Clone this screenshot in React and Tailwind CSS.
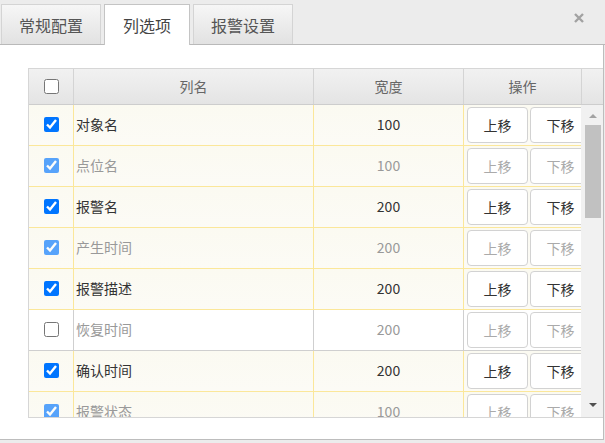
import React from "react";

const rows = [
  { name: "对象名", width: 100, on: true, enabled: true },
  { name: "点位名", width: 100, on: true, enabled: false },
  { name: "报警名", width: 200, on: true, enabled: true },
  { name: "产生时间", width: 200, on: true, enabled: false },
  { name: "报警描述", width: 200, on: true, enabled: true },
  { name: "恢复时间", width: 200, on: false, enabled: false },
  { name: "确认时间", width: 200, on: true, enabled: true },
  { name: "报警状态", width: 100, on: true, enabled: false },
];

const font = { fontFamily: '"Noto Sans CJK SC", "Liberation Sans", sans-serif' };

function Tab({ label, active }) {
  return (
    <div
      className={
        active
          ? "h-[41px] px-[18px] flex items-center border border-b-0 border-[#c4c4c4] bg-white text-[16px] text-[#444] relative top-[1px]"
          : "h-[40px] px-[17px] flex items-center border border-b-0 border-[#d4d4d4] bg-gradient-to-b from-[#f6f6f6] via-[#ececec] to-[#e2e2e2] text-[16px] text-[#555]"
      }
    >
      {label}
    </div>
  );
}

function MoveButton({ label, enabled }) {
  return (
    <button
      className={
        "shrink-0 w-[61px] h-[36px] rounded-[4px] border border-[#d2d2d2] bg-white text-[14px] leading-none " +
        (enabled ? "text-[#333]" : "text-[#aaa]")
      }
    >
      {label}
    </button>
  );
}

function Row({ row }) {
  const line = row.on ? "border-[#fbe79a]" : "border-[#cfcfcf]";
  const text = row.enabled ? "text-[#333]" : "text-[#999]";
  return (
    <div
      className={
        "flex h-[41px] shrink-0 border-b " +
        line +
        (row.on ? " bg-gradient-to-b from-[#fbfaf1] to-[#fcfbf6]" : " bg-white")
      }
    >
      <div className={"w-[45px] shrink-0 flex items-center justify-center pb-[1px] border-r " + line}>
        <input
          type="checkbox"
          defaultChecked={row.on}
          className={"w-[15px] h-[15px] m-0 " + (row.on && !row.enabled ? "opacity-65" : "")}
        />
      </div>
      <div className={"w-[240px] shrink-0 flex items-center pl-[2px] pb-[1px] text-[14px] border-r " + line + " " + text}>
        {row.name}
      </div>
      <div className={"w-[150px] shrink-0 flex items-center justify-center pb-[1px] text-[14px] border-r " + line + " " + text}>
        {row.width}
      </div>
      <div className="w-[118px] shrink-0 flex items-center gap-[2px] pl-[3px] overflow-hidden">
        <MoveButton label="上移" enabled={row.enabled} />
        <MoveButton label="下移" enabled={row.enabled} />
      </div>
    </div>
  );
}

export default function App() {
  return (
    <div className="w-[605px] h-[443px] bg-[#ececec] overflow-hidden relative" style={font}>
      {/* tabs */}
      <div className="h-[45px] flex items-end gap-[3px] pl-[1px] border-b border-[#b9b9b9]">
        <Tab label="常规配置" />
        <Tab label="列选项" active />
        <Tab label="报警设置" />
      </div>
      <svg className="absolute left-[574px] top-[13px]" width="10" height="10" viewBox="0 0 10 10">
        <path d="M1 1 L9 9 M9 1 L1 9" stroke="#a2a2a2" strokeWidth="2.4" />
      </svg>

      {/* panel */}
      <div className="w-[604px] h-[395px] bg-white border-r border-b border-[#bdbdbd] pl-[28px] pt-[23px]">
        <div className="h-[350px] border-t border-b border-l border-[#d6d6d6] flex flex-col">
          {/* header */}
          <div className="h-[36px] shrink-0 flex border-b border-[#cdcdcd] bg-gradient-to-b from-[#f1f1f1] via-[#ebebeb] to-[#e4e4e4] text-[14px] text-[#666]">
            <div className="w-[45px] shrink-0 flex items-center justify-center border-r border-[#d4d4d4]">
              <input type="checkbox" className="w-[15px] h-[15px] m-0" />
            </div>
            <div className="w-[240px] shrink-0 flex items-center justify-center border-r border-[#d4d4d4]">列名</div>
            <div className="w-[150px] shrink-0 flex items-center justify-center border-r border-[#d4d4d4]">宽度</div>
            <div className="w-[118px] shrink-0 flex items-center justify-center border-r border-[#d4d4d4]">操作</div>
            <div className="flex-1" />
          </div>

          {/* body */}
          <div className="flex h-[312px]">
            <div className="w-[553px] h-[312px] overflow-hidden flex flex-col">
              {rows.map((r) => (
                <Row key={r.name} row={r} />
              ))}
            </div>
            <div className="w-[22px] h-[312px] bg-[#f1f1f1] flex flex-col items-center pl-[2px]">
              <div className="mt-[9px] w-0 h-0 border-l-[4px] border-r-[4px] border-b-[4px] border-l-transparent border-r-transparent border-b-[#a3a3a3]" />
              <div className="mt-[7px] w-[16px] h-[93px] bg-[#c1c1c1]" />
              <div className="mt-auto mb-[10px] w-0 h-0 border-l-[4px] border-r-[4px] border-t-[4px] border-l-transparent border-r-transparent border-t-[#505050]" />
            </div>
          </div>
        </div>
      </div>
    </div>
  );
}
